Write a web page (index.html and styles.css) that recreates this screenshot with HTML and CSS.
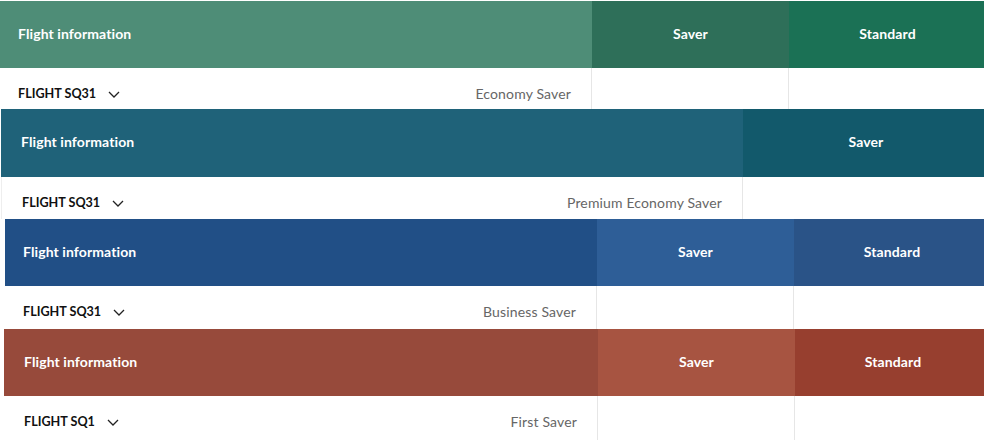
FILE: index.html
```html
<!DOCTYPE html>
<html lang="en">
<head>
<meta charset="utf-8">
<title>Fare tables</title>
<link rel="stylesheet" href="styles.css">
</head>
<body>
<div class="stack">
  <section class="fare fare--eco">
    <div class="fare-head">
      <div class="cell info">Flight information</div>
      <div class="cell col-a">Saver</div>
      <div class="cell col-b">Standard</div>
    </div>
    <div class="fare-body">
      <div class="bcell binfo">
        <span class="flight">FLIGHT SQ31 <svg class="chev" viewBox="0 0 12 7" width="12" height="7"><path d="M1 1l5 5 5-5" fill="none" stroke="#222" stroke-width="1.3"/></svg></span>
        <span class="cabin">Economy Saver</span>
      </div>
      <div class="bcell"></div>
      <div class="bcell"></div>
    </div>
  </section>

  <section class="fare fare--pey">
    <div class="fare-head">
      <div class="cell info">Flight information</div>
      <div class="cell col-a">Saver</div>
    </div>
    <div class="fare-body">
      <div class="bcell binfo">
        <span class="flight">FLIGHT SQ31 <svg class="chev" viewBox="0 0 12 7" width="12" height="7"><path d="M1 1l5 5 5-5" fill="none" stroke="#222" stroke-width="1.3"/></svg></span>
        <span class="cabin">Premium Economy Saver</span>
      </div>
      <div class="bcell"></div>
    </div>
  </section>

  <section class="fare fare--biz">
    <div class="fare-head">
      <div class="cell info">Flight information</div>
      <div class="cell col-a">Saver</div>
      <div class="cell col-b">Standard</div>
    </div>
    <div class="fare-body">
      <div class="bcell binfo">
        <span class="flight">FLIGHT SQ31 <svg class="chev" viewBox="0 0 12 7" width="12" height="7"><path d="M1 1l5 5 5-5" fill="none" stroke="#222" stroke-width="1.3"/></svg></span>
        <span class="cabin">Business Saver</span>
      </div>
      <div class="bcell"></div>
      <div class="bcell"></div>
    </div>
  </section>

  <section class="fare fare--first">
    <div class="fare-head">
      <div class="cell info">Flight information</div>
      <div class="cell col-a">Saver</div>
      <div class="cell col-b">Standard</div>
    </div>
    <div class="fare-body">
      <div class="bcell binfo">
        <span class="flight">FLIGHT SQ1 <svg class="chev" viewBox="0 0 12 7" width="12" height="7"><path d="M1 1l5 5 5-5" fill="none" stroke="#222" stroke-width="1.3"/></svg></span>
        <span class="cabin">First Saver</span>
      </div>
      <div class="bcell"></div>
      <div class="bcell"></div>
    </div>
  </section>
</div>
</body>
</html>
```

FILE: styles.css
```css
* { box-sizing: border-box; }
html, body { margin: 0; padding: 0; background: #fff; }
body {
  width: 984px;
  height: 440px;
  overflow: hidden;
  font-family: Lato, "Open Sans", Arial, sans-serif;
}
.stack {
  display: flex;
  flex-direction: column;
  padding-top: 1px;
}
.fare {
  width: 1000px;
}
.fare-head, .fare-body {
  display: grid;
}
.fare-head .cell {
  display: flex;
  align-items: center;
  justify-content: center;
  padding-bottom: 3px;
  color: #fff;
  font-weight: 700;
  font-size: 14px;
  letter-spacing: 0.1px;
}
.fare-head .info {
  justify-content: flex-start;
  padding-left: 18px;
}
.fare-body .bcell {
  border-right: 1px solid #e6e6e6;
  background: #fff;
}
.binfo {
  display: flex;
  justify-content: space-between;
  align-items: flex-start;
  padding: 18px 20px 0 18px;
  line-height: 16px;
}
.flight {
  font-weight: 700;
  font-size: 12.6px;
  color: #111;
  display: inline-flex;
  align-items: center;
  gap: 6px;
}
.chev { margin-left: 6px; }
.cabin {
  font-size: 14px;
  color: #666;
  letter-spacing: 0.15px;
}

/* Economy */
.fare--eco .fare-head, .fare--eco .fare-body { grid-template-columns: 592px 197px 197px; }
.fare--eco .fare-head { height: 67px; }
.fare--eco .fare-body { height: 41px; }
.fare--eco .info { background: #4e8d77; }
.fare--eco .col-a { background: #2e6f59; }
.fare--eco .col-b { background: #1b7155; }

/* Premium economy */
.fare--pey { margin-left: 1px; }
.fare--pey .fare-head, .fare--pey .fare-body { grid-template-columns: 742px 246px; }
.fare--pey .fare-head { height: 68px; }
.fare--pey .fare-body { height: 42px; }
.fare--pey .info { background: #1f6279; padding-left: 20px; }
.fare--pey .binfo { padding-left: 20px; }
.fare--pey .fare-body .bcell:first-child { border-left: 1px solid #eee; }
.fare--pey .col-a { background: #12596b; }

/* Business */
.fare--biz { margin-left: 5px; }
.fare--biz .fare-head, .fare--biz .fare-body { grid-template-columns: 592px 197px 196px; }
.fare--biz .fare-head { height: 67px; }
.fare--biz .fare-body { height: 43px; }
.fare--biz .info { background: #214f86; }
.fare--biz .col-a { background: #2e5e97; }
.fare--biz .col-b { background: #2a5387; }

/* First */
.fare--first { margin-left: 4px; }
.fare--first .fare-head, .fare--first .fare-body { grid-template-columns: 594px 197px 196px; }
.fare--first .fare-head { height: 67px; }
.fare--first .fare-body { height: 44px; }
.fare--first .info { background: #974a3b; padding-left: 20px; }
.fare--first .binfo { padding-left: 20px; }
.fare--first .col-a { background: #a75441; }
.fare--first .col-b { background: #973f2f; }
```
